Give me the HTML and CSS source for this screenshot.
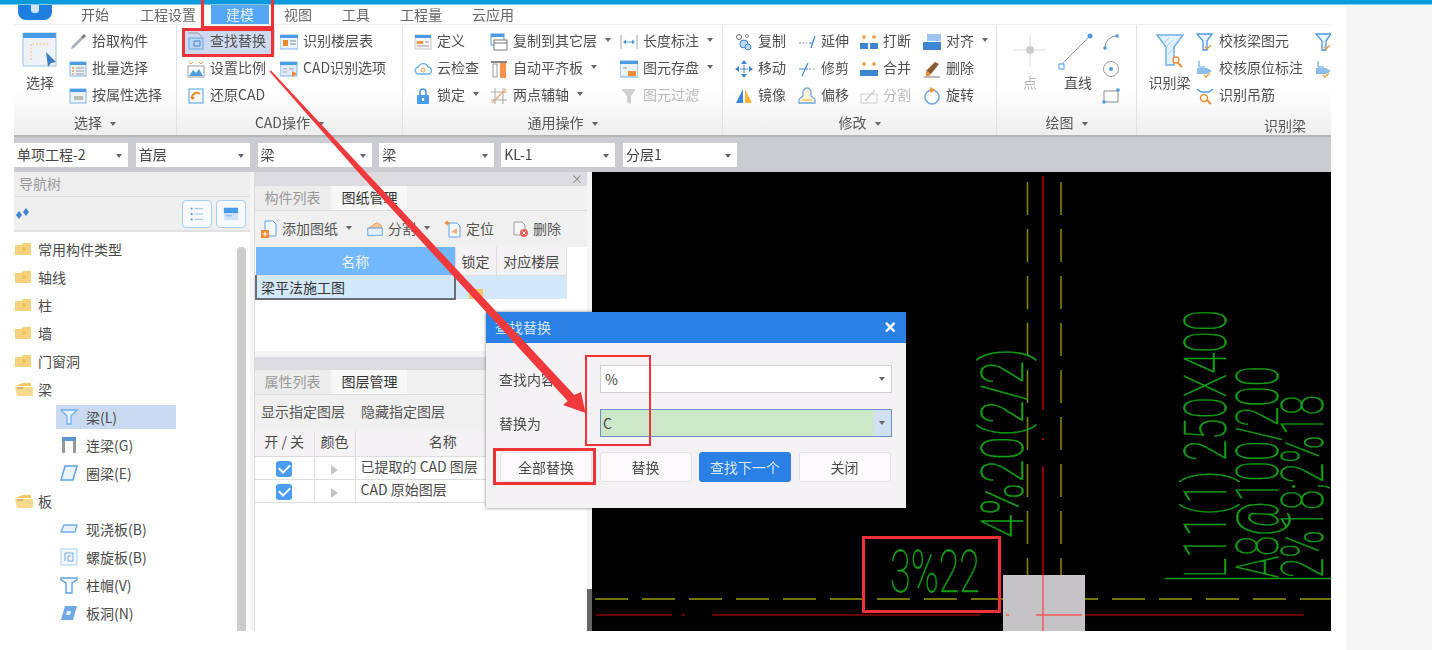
FILE: index.html
```html
<!DOCTYPE html>
<html lang="zh-CN">
<head>
    <meta charset="UTF-8">
    <title>查找替换</title>
    <link rel="stylesheet" href="styles.css">
</head>
<body>
<svg class="defs">
    <symbol id="i-pick" viewBox="0 0 18 18"><path d="M2 16l3-1 9-9-2-2-9 9z" fill="#aab0b6"/><path d="M12 4l3-3 2 2-3 3z" fill="#777"/></symbol>
    <symbol id="i-batch" viewBox="0 0 18 18"><rect x="1" y="2" width="16" height="14" fill="#eef4fb" stroke="#7db4ea"/><rect x="1" y="2" width="16" height="3" fill="#4a9be8"/><path d="M3 8h2M3 11h2M3 14h2" stroke="#f59a3a" stroke-width="1.4"/><path d="M7 8h8M7 11h8M7 14h8" stroke="#999"/></symbol>
    <symbol id="i-attr" viewBox="0 0 18 18"><rect x="1" y="2" width="16" height="14" fill="#eef4fb" stroke="#7db4ea"/><rect x="1" y="2" width="16" height="3" fill="#4a9be8"/><rect x="5" y="9" width="9" height="4" fill="#bbb"/></symbol>
    <symbol id="i-find" viewBox="0 0 18 18"><path d="M1 1h10l4 4" fill="none" stroke="#999"/><rect x="2" y="6" width="14" height="11" fill="#b9d4f4" stroke="#6fa8e4"/><path d="M7 9h6v5H7z" fill="none" stroke="#4a86c8"/></symbol>
    <symbol id="i-floor" viewBox="0 0 18 18"><rect x="0" y="2" width="18" height="14" fill="#eef4fb" stroke="#7db4ea"/><rect x="0" y="2" width="18" height="3" fill="#4a9be8"/><rect x="3" y="7" width="5" height="6" fill="#f08a30"/><path d="M10 8h6M10 11h6" stroke="#888"/></symbol>
    <symbol id="i-scale" viewBox="0 0 18 18"><path d="M2 2l2 2 2-2M12 2l2 2 2-2" stroke="#f59a3a" fill="none"/><rect x="1" y="6" width="16" height="11" fill="#fff" stroke="#999"/><path d="M2 16l4-6 3 3 3-4 4 7z" fill="#4a9be8"/></symbol>
    <symbol id="i-restore" viewBox="0 0 18 18"><rect x="2" y="2" width="14" height="14" fill="none" stroke="#4a9be8"/><path d="M5 12a5 5 0 0 1 8-5" fill="none" stroke="#f08a30" stroke-width="2"/><path d="M3 10l3 3 2-3z" fill="#f08a30"/></symbol>
    <symbol id="i-cadopt" viewBox="0 0 18 18"><rect x="0" y="2" width="17" height="14" fill="#dfeafa" stroke="#7db4ea"/><rect x="0" y="2" width="17" height="3" fill="#4a9be8"/><path d="M3 9h4M3 12h4M9 9h5" stroke="#9ab"/><path d="M12 11l5 3-5 3z" fill="#f08a30"/></symbol>
    <symbol id="i-define" viewBox="0 0 18 18"><rect x="1" y="2" width="16" height="14" fill="#f4f4f4" stroke="#ccc"/><rect x="1" y="2" width="16" height="3" fill="#4a9be8"/><rect x="3" y="8" width="6" height="3" fill="#f59a3a"/><path d="M11 9h4M3 13h12" stroke="#999"/></symbol>
    <symbol id="i-cloud" viewBox="0 0 18 18"><path d="M5 14a3.5 3.5 0 0 1-.5-7A5 5 0 0 1 14 7a3.5 3.5 0 0 1 0 7z" fill="#fff" stroke="#63aeee" stroke-width="1.3"/><circle cx="9" cy="10" r="2" fill="none" stroke="#f59a3a"/></symbol>
    <symbol id="i-lock" viewBox="0 0 18 18"><path d="M6 8V5a3 3 0 0 1 6 0v3" fill="none" stroke="#4a9be8" stroke-width="1.6"/><rect x="3" y="8" width="12" height="9" rx="1" fill="#4a9be8"/><rect x="8" y="11" width="2" height="3" fill="#fff"/></symbol>
    <symbol id="i-copyf" viewBox="0 0 18 18"><rect x="1" y="1" width="13" height="11" fill="#fff" stroke="#4a9be8"/><rect x="1" y="1" width="13" height="3" fill="#4a9be8"/><rect x="4" y="7" width="13" height="10" fill="#fff" stroke="#777"/><path d="M4 10h13" stroke="#777"/></symbol>
    <symbol id="i-slab" viewBox="0 0 18 18"><path d="M1 2h16" stroke="#888" stroke-width="2"/><rect x="3" y="4" width="4" height="13" fill="#fff" stroke="#999"/><rect x="10" y="3" width="6" height="15" fill="#f8924a"/></symbol>
    <symbol id="i-axis" viewBox="0 0 18 18"><path d="M5 1v16M13 1v16M1 5h16M1 13h16" stroke="#aaa"/><path d="M2 16L16 2" stroke="#f0a878" stroke-width="1.4"/></symbol>
    <symbol id="i-dim" viewBox="0 0 18 18"><path d="M1 2v14M17 2v14" stroke="#aaa"/><path d="M4 9h10" stroke="#4a9be8"/><path d="M3 9l3-2.500v5zM15 9l-3-2.500v5z" fill="#4a9be8"/></symbol>
    <symbol id="i-save" viewBox="0 0 18 18"><rect x="0" y="1" width="18" height="16" fill="#eaf2fb" stroke="#6fa8e4"/><rect x="0" y="1" width="18" height="3" fill="#4a9be8"/><rect x="8" y="11" width="8" height="5" fill="#f08a30"/><path d="M3 8h4" stroke="#999"/></symbol>
    <symbol id="i-filter" viewBox="0 0 18 18"><path d="M1 2h15l-5 7v8l-4-2V9z" fill="#cfcfcf"/></symbol>
    <symbol id="i-copy" viewBox="0 0 18 18"><circle cx="4" cy="4" r="2.500" fill="none" stroke="#666"/><circle cx="12" cy="3" r="1.500" fill="none" stroke="#888"/><circle cx="9" cy="11" r="4" fill="#bcd8f5" stroke="#3c86d4"/><circle cx="13" cy="14" r="3" fill="#bcd8f5" stroke="#3c86d4"/></symbol>
    <symbol id="i-move" viewBox="0 0 18 18"><path d="M5 9h8M9 5v8" stroke="#3c86d4"/><path d="M9 0l3 4H6zM9 18l-3-4h6zM0 9l4-3v6zM18 9l-4 3V6z" fill="#3c86d4"/></symbol>
    <symbol id="i-mirror" viewBox="0 0 18 18"><path d="M8 2v14H1z" fill="#3c86d4"/><path d="M10 2v14h7z" fill="#f7b733"/></symbol>
    <symbol id="i-extend" viewBox="0 0 18 18"><path d="M1 10h8" stroke="#888" stroke-dasharray="2 1.500"/><path d="M11 10h3M13 15l4-12" stroke="#3c86d4" stroke-width="1.200"/></symbol>
    <symbol id="i-trim" viewBox="0 0 18 18"><path d="M11 9h6" stroke="#888" stroke-dasharray="2 1.500"/><path d="M1 9h9M4 16l6-13" stroke="#3c86d4" stroke-width="1.200"/></symbol>
    <symbol id="i-offset" viewBox="0 0 18 18"><path d="M1 16v-3c0-2 3-3 4-4V5a4 4 0 0 1 8 0v4c1 1 4 2 4 4v3z" fill="#fff3d8" stroke="#6fa8e4" stroke-width="1.300"/><path d="M4 13h10" stroke="#f0b040"/></symbol>
    <symbol id="i-break" viewBox="0 0 18 18"><path d="M4 2v4M14 2v4" stroke="#f59a3a" stroke-width="1.500"/><path d="M2 4h4M12 4h4" stroke="#f59a3a" stroke-width="1.500"/><rect x="0" y="10" width="8" height="6" fill="#3c86d4"/><rect x="10" y="10" width="8" height="6" fill="#3c86d4"/></symbol>
    <symbol id="i-merge" viewBox="0 0 18 18"><path d="M4 2v4M14 2v4" stroke="#f59a3a" stroke-width="1.500"/><path d="M2 4h4M12 4h4" stroke="#f59a3a" stroke-width="1.500"/><rect x="0" y="10" width="18" height="6" fill="#3c86d4"/></symbol>
    <symbol id="i-split" viewBox="0 0 18 18"><path d="M1 7h16v9H1z" fill="none" stroke="#ccc"/><path d="M5 14L15 3" stroke="#ccc" stroke-width="1.500"/></symbol>
    <symbol id="i-alignr" viewBox="0 0 18 18"><rect x="4" y="1" width="14" height="7" fill="#9dc5ef"/><rect x="0" y="9" width="18" height="8" fill="#3c86d4"/></symbol>
    <symbol id="i-erase" viewBox="0 0 18 18"><path d="M3 11l9-9 4 2-8 10z" fill="#8a5a30"/><path d="M3 11l5 3-2 2H3z" fill="#f08a30"/><path d="M1 17h16" stroke="#777"/></symbol>
    <symbol id="i-rotate" viewBox="0 0 18 18"><circle cx="9" cy="10" r="7" fill="none" stroke="#6fa8e4" stroke-width="1.600"/><path d="M7 0l6 3-6 3z" fill="#f59a3a"/></symbol>
    <symbol id="i-arc" viewBox="0 0 18 18"><path d="M3 15C3 8 8 3 15 3" fill="none" stroke="#888"/><circle cx="3" cy="15" r="1.800" fill="#4a9be8"/><circle cx="15" cy="3" r="1.800" fill="#4a9be8"/></symbol>
    <symbol id="i-circle" viewBox="0 0 18 18"><circle cx="9" cy="9" r="7.500" fill="none" stroke="#999"/><circle cx="9" cy="9" r="2" fill="#4a9be8"/></symbol>
    <symbol id="i-rect" viewBox="0 0 18 18"><path d="M2 4h14v11H2z" fill="none" stroke="#888"/><circle cx="16" cy="3" r="1.800" fill="#4a9be8"/><circle cx="2" cy="15" r="1.800" fill="#4a9be8"/></symbol>
    <symbol id="i-check" viewBox="0 0 18 18"><path d="M1 1h15l-5 7v9H7V8z" fill="#eaf3fc" stroke="#4a9be8" stroke-width="1.300"/><path d="M9 14l2 2 4-4" fill="none" stroke="#f59a3a" stroke-width="1.300"/></symbol>
    <symbol id="i-checkl" viewBox="0 0 18 18"><path d="M3 1v6h6" fill="none" stroke="#4a9be8"/><path d="M1 8h10l5 3-5 3H1z" fill="#8cbcee"/><path d="M8 15l2 2 4-4" fill="none" stroke="#f59a3a" stroke-width="1.300"/></symbol>
    <symbol id="i-hanger" viewBox="0 0 18 18"><path d="M1 2l4 3h8l4-3" fill="none" stroke="#4a9be8" stroke-width="1.300"/><circle cx="8" cy="11" r="3.500" fill="none" stroke="#f08a30" stroke-width="1.500"/><path d="M11 13l4 4" stroke="#f08a30" stroke-width="1.800"/></symbol>
    <symbol id="i-beam" viewBox="0 0 18 18"><path d="M1 2h16l-6 6v8H7V8z" fill="#e6f0fb" stroke="#6fb0ee" stroke-width="1.300"/></symbol>
    <symbol id="i-lian" viewBox="0 0 18 18"><rect x="2" y="1" width="14" height="4" fill="#5b95d4"/><path d="M3.500 5v12M14.500 5v12" stroke="#999" stroke-width="3"/></symbol>
    <symbol id="i-ring" viewBox="0 0 18 18"><path d="M5 2h12l-4 14H1z" fill="#eaf3fc" stroke="#5ba2ea" stroke-width="1.500"/></symbol>
    <symbol id="i-cast" viewBox="0 0 18 18"><path d="M4 5h13l-2 7H1z" fill="#eaf3fc" stroke="#6fb0ee" stroke-width="1.500"/></symbol>
    <symbol id="i-spiral" viewBox="0 0 18 18"><rect x="1" y="1" width="16" height="16" fill="#f3f8fd" stroke="#a6cdf3"/><path d="M5 13V5h8v8H8V8h3" fill="none" stroke="#6fa8e4"/></symbol>
    <symbol id="i-cap" viewBox="0 0 18 18"><path d="M1 2h16v2l-5 3v10H6V7L1 4z" fill="#f3f8fd" stroke="#5ba2ea" stroke-width="1.400"/></symbol>
    <symbol id="i-hole" viewBox="0 0 18 18"><path d="M5 2h12l-4 14H1z" fill="#6fa8e4"/><path d="M7 7h4l-1 4H6z" fill="#e6f0fb"/></symbol>
    <symbol id="i-fold" viewBox="0 0 18 14"><path d="M0 3h6l2-2h8v12H0z" fill="#f6d27c"/><path d="M7 7h4M9 5v4" stroke="#e8b64e"/></symbol>
    <symbol id="i-open" viewBox="0 0 18 14"><path d="M0 4l8-3h8v3z" fill="#f3c865"/><path d="M0 5h18v9H2z" fill="#f8da8e"/><path d="M2 6h6" stroke="#9a8750"/></symbol>
    <symbol id="i-add" viewBox="0 0 18 18"><path d="M5 1h8l3 3v12H5z" fill="#f3f8fd" stroke="#5ba2ea"/><rect x="1" y="10" width="8" height="8" fill="#f08a30"/><path d="M5 11.500v5M2.500 14h5" stroke="#fff"/></symbol>
    <symbol id="i-cut" viewBox="0 0 20 18"><path d="M3 8l9-6 5 3v3z" fill="#f7c9a0" stroke="#f08a30"/><rect x="2" y="8" width="16" height="8" fill="#e6f0fb" stroke="#5ba2ea"/></symbol>
    <symbol id="i-loc" viewBox="0 0 18 18"><path d="M5 3h8l3 3v11H5z" fill="#f3f8fd" stroke="#5ba2ea"/><path d="M3 0l1 2 2 1-2 1-1 2-1-2-2-1 2-1z" fill="#f08a30"/><path d="M7 12l6-4v6z" fill="#f8b070"/></symbol>
    <symbol id="i-del" viewBox="0 0 18 18"><path d="M3 2h8l3 3v10H3z" fill="#f7f7f7" stroke="#999"/><circle cx="13" cy="13" r="4" fill="#e8625a"/><path d="M11.500 11.500l3 3M14.500 11.500l-3 3" stroke="#fff"/></symbol>
</svg>

<div class="topbar"></div>
<div class="page">
    <div class="app">
        <div class="tabs">
            <div class="logo"><span class="logo-mark"></span></div>
            <div class="tab-first tab">开始</div>
            <div class="tab">工程设置</div>
            <div class="tab active">建模</div>
            <div class="tab">视图</div>
            <div class="tab">工具</div>
            <div class="tab">工程量</div>
            <div class="tab">云应用</div>
        </div>

        <div class="ribbon">
            <div class="group g1">
                <div class="group-body">
                    <div class="big">
                        <svg class="big-icon" viewBox="0 0 36 39"><rect x="1" y="1" width="33" height="33" fill="#eef1f8" stroke="#9cc4ee"/><rect x="1" y="1" width="33" height="5" fill="#4a9be8"/><path d="M9 28V12h18" fill="none" stroke="#f5c26a" stroke-dasharray="2 1.500"/><path d="M24 20l10 10-5 1-3 4z" fill="#3c7ec4"/></svg>
                        <span>选择</span>
                    </div>
                    <div class="col">
                        <div class="item"><svg class="ico"><use href="#i-pick"/></svg>拾取构件</div>
                        <div class="item"><svg class="ico"><use href="#i-batch"/></svg>批量选择</div>
                        <div class="item"><svg class="ico"><use href="#i-attr"/></svg>按属性选择</div>
                    </div>
                </div>
                <div class="group-label">选择 <i class="caret"></i></div>
            </div>

            <div class="group g2">
                <div class="group-body">
                    <div class="col">
                        <div class="item hl"><svg class="ico"><use href="#i-find"/></svg>查找替换</div>
                        <div class="item"><svg class="ico"><use href="#i-scale"/></svg>设置比例</div>
                        <div class="item"><svg class="ico"><use href="#i-restore"/></svg>还原CAD</div>
                    </div>
                    <div class="col">
                        <div class="item"><svg class="ico"><use href="#i-floor"/></svg>识别楼层表</div>
                        <div class="item"><svg class="ico"><use href="#i-cadopt"/></svg>CAD识别选项</div>
                    </div>
                </div>
                <div class="group-label">CAD操作 <i class="caret"></i></div>
            </div>

            <div class="group g3">
                <div class="group-body">
                    <div class="col">
                        <div class="item"><svg class="ico"><use href="#i-define"/></svg>定义</div>
                        <div class="item"><svg class="ico"><use href="#i-cloud"/></svg>云检查</div>
                        <div class="item"><svg class="ico"><use href="#i-lock"/></svg>锁定 <i class="caret"></i></div>
                    </div>
                    <div class="col">
                        <div class="item"><svg class="ico"><use href="#i-copyf"/></svg>复制到其它层 <i class="caret"></i></div>
                        <div class="item"><svg class="ico"><use href="#i-slab"/></svg>自动平齐板 <i class="caret"></i></div>
                        <div class="item"><svg class="ico"><use href="#i-axis"/></svg>两点辅轴 <i class="caret"></i></div>
                    </div>
                    <div class="col">
                        <div class="item"><svg class="ico"><use href="#i-dim"/></svg>长度标注 <i class="caret"></i></div>
                        <div class="item"><svg class="ico"><use href="#i-save"/></svg>图元存盘 <i class="caret"></i></div>
                        <div class="item off"><svg class="ico"><use href="#i-filter"/></svg>图元过滤</div>
                    </div>
                </div>
                <div class="group-label">通用操作 <i class="caret"></i></div>
            </div>

            <div class="group g4">
                <div class="group-body">
                    <div class="col">
                        <div class="item"><svg class="ico"><use href="#i-copy"/></svg>复制</div>
                        <div class="item"><svg class="ico"><use href="#i-move"/></svg>移动</div>
                        <div class="item"><svg class="ico"><use href="#i-mirror"/></svg>镜像</div>
                    </div>
                    <div class="col">
                        <div class="item"><svg class="ico"><use href="#i-extend"/></svg>延伸</div>
                        <div class="item"><svg class="ico"><use href="#i-trim"/></svg>修剪</div>
                        <div class="item"><svg class="ico"><use href="#i-offset"/></svg>偏移</div>
                    </div>
                    <div class="col">
                        <div class="item"><svg class="ico"><use href="#i-break"/></svg>打断</div>
                        <div class="item"><svg class="ico"><use href="#i-merge"/></svg>合并</div>
                        <div class="item off"><svg class="ico"><use href="#i-split"/></svg>分割</div>
                    </div>
                    <div class="col">
                        <div class="item"><svg class="ico"><use href="#i-alignr"/></svg>对齐 <i class="caret"></i></div>
                        <div class="item"><svg class="ico"><use href="#i-erase"/></svg>删除</div>
                        <div class="item"><svg class="ico"><use href="#i-rotate"/></svg>旋转</div>
                    </div>
                </div>
                <div class="group-label">修改 <i class="caret"></i></div>
            </div>

            <div class="group g5">
                <div class="group-body">
                    <div class="big off">
                        <svg class="big-icon" viewBox="0 0 36 39"><path d="M18 2v32M2 18h32" stroke="#ddd"/><circle cx="18" cy="18" r="4" fill="#ccc"/></svg>
                        <span>点</span>
                    </div>
                    <div class="big">
                        <svg class="big-icon" viewBox="0 0 36 39"><path d="M0 34L30 4" stroke="#999"/><rect x="-1" y="32" width="5" height="5" fill="#fff" stroke="#4a9be8"/><circle cx="30" cy="4" r="2.500" fill="#4a9be8"/></svg>
                        <span>直线</span>
                    </div>
                    <div class="col">
                        <div class="item"><svg class="ico"><use href="#i-arc"/></svg></div>
                        <div class="item"><svg class="ico"><use href="#i-circle"/></svg></div>
                        <div class="item"><svg class="ico"><use href="#i-rect"/></svg></div>
                    </div>
                </div>
                <div class="group-label">绘图 <i class="caret"></i></div>
            </div>

            <div class="group g6">
                <div class="group-body">
                    <div class="big">
                        <svg class="big-icon" viewBox="0 0 36 39"><path d="M5 3h26l-9 12v18h-8V15z" fill="#e3effb" stroke="#6fb0ee" stroke-width="1.500"/><path d="M11 12l6-6M15 14l6-6M16 22l5-5" stroke="#a8cdf3"/><circle cx="24" cy="28" r="3" fill="#fff" stroke="#f08a30" stroke-width="1.300"/><path d="M26 31l4 4" stroke="#f08a30" stroke-width="1.800"/></svg>
                        <span>识别梁</span>
                    </div>
                    <div class="col">
                        <div class="item"><svg class="ico"><use href="#i-check"/></svg>校核梁图元</div>
                        <div class="item"><svg class="ico"><use href="#i-checkl"/></svg>校核原位标注</div>
                        <div class="item"><svg class="ico"><use href="#i-hanger"/></svg>识别吊筋</div>
                    </div>
                    <div class="col">
                        <div class="item"><svg class="ico"><use href="#i-check"/></svg></div>
                        <div class="item"><svg class="ico"><use href="#i-checkl"/></svg></div>
                    </div>
                </div>
                <div class="group-label label-right">识别梁</div>
            </div>
        </div>

        <div class="combos">
            <div class="combo">单项工程-2<i class="caret"></i></div>
            <div class="combo">首层<i class="caret"></i></div>
            <div class="combo">梁<i class="caret"></i></div>
            <div class="combo">梁<i class="caret"></i></div>
            <div class="combo">KL-1<i class="caret"></i></div>
            <div class="combo">分层1<i class="caret"></i></div>
        </div>

        <div class="workspace">
            <div class="nav">
                <div class="nav-head">导航树</div>
                <div class="nav-tools">
                    <svg class="sparkle" viewBox="0 0 16 12"><path d="M5 3l3 4-3 4-3-4zM12 0l3 4-3 4-3-4z" fill="#3c86d4"/></svg>
                    <div class="view-btn"><svg viewBox="0 0 18 18"><path d="M2 3h2M2 9h2M2 15h2" stroke="#4a9be8" stroke-width="2"/><path d="M6 3h10M6 9h10M6 15h10" stroke="#8fbdec"/></svg></div>
                    <div class="view-btn"><svg viewBox="0 0 18 18"><rect x="1" y="2" width="16" height="14" fill="#cfe3f8"/><rect x="1" y="2" width="16" height="6" fill="#4a9be8"/><path d="M3 11h7" stroke="#6fa8e4"/></svg></div>
                </div>
                <div class="tree">
                    <div class="tree-list">
                        <div class="row"><svg class="folder"><use href="#i-fold"/></svg>常用构件类型</div>
                        <div class="row"><svg class="folder"><use href="#i-fold"/></svg>轴线</div>
                        <div class="row"><svg class="folder"><use href="#i-fold"/></svg>柱</div>
                        <div class="row"><svg class="folder"><use href="#i-fold"/></svg>墙</div>
                        <div class="row"><svg class="folder"><use href="#i-fold"/></svg>门窗洞</div>
                        <div class="row"><svg class="folder"><use href="#i-open"/></svg>梁</div>
                        <div class="row child"><div class="leaf selected"><svg class="ico"><use href="#i-beam"/></svg>梁(L)</div></div>
                        <div class="row child"><div class="leaf"><svg class="ico"><use href="#i-lian"/></svg>连梁(G)</div></div>
                        <div class="row child"><div class="leaf"><svg class="ico"><use href="#i-ring"/></svg>圈梁(E)</div></div>
                        <div class="row"><svg class="folder"><use href="#i-open"/></svg>板</div>
                        <div class="row child"><div class="leaf"><svg class="ico"><use href="#i-cast"/></svg>现浇板(B)</div></div>
                        <div class="row child"><div class="leaf"><svg class="ico"><use href="#i-spiral"/></svg>螺旋板(B)</div></div>
                        <div class="row child"><div class="leaf"><svg class="ico"><use href="#i-cap"/></svg>柱帽(V)</div></div>
                        <div class="row child"><div class="leaf"><svg class="ico"><use href="#i-hole"/></svg>板洞(N)</div></div>
                    </div>
                    <div class="scrollbar"></div>
                </div>
            </div>

            <div class="mid">
                <div class="panel panel-top">
                    <div class="strip"><span class="strip-x">×</span></div>
                    <div class="ptabs">
                        <div class="ptab">构件列表</div>
                        <div class="ptab on">图纸管理</div>
                    </div>
                    <div class="ptools">
                        <span class="tool"><svg class="ico"><use href="#i-add"/></svg>添加图纸 <i class="caret"></i></span>
                        <span class="tool"><svg class="ico"><use href="#i-cut"/></svg>分割 <i class="caret"></i></span>
                        <span class="tool"><svg class="ico"><use href="#i-loc"/></svg>定位</span>
                        <span class="tool tool-last"><svg class="ico"><use href="#i-del"/></svg>删除</span>
                    </div>
                    <table class="grid sheets">
                        <tr class="head"><th class="th-blue">名称</th><th>锁定</th><th>对应楼层</th></tr>
                        <tr class="sel"><td class="cur">梁平法施工图</td><td><svg class="mini-lock" viewBox="0 0 18 14"><path d="M2 4h14v10H2z" fill="#f3c865"/></svg></td><td></td></tr>
                    </table>
                </div>
                <div class="panel panel-bot">
                    <div class="strip"></div>
                    <div class="ptabs">
                        <div class="ptab">属性列表</div>
                        <div class="ptab on">图层管理</div>
                    </div>
                    <div class="ptools layers-tools">
                        <span>显示指定图层</span>
                        <span>隐藏指定图层</span>
                    </div>
                    <table class="grid layers">
                        <tr class="head"><th>开 / 关</th><th>颜色</th><th>名称</th></tr>
                        <tr><td class="c"><span class="tick"></span></td><td class="c"><i class="play"></i></td><td>已提取的 CAD 图层</td></tr>
                        <tr><td class="c"><span class="tick"></span></td><td class="c"><i class="play"></i></td><td>CAD 原始图层</td></tr>
                    </table>
                </div>
            </div>

            <div class="sash"></div>

            <svg class="cad" viewBox="592 172 739 459">
                <path d="M1043 176V410M1043 467V631" stroke="#8a0000" stroke-width="2"/>
                <path d="M1043 438v2" stroke="#a00000" stroke-width="2"/>
                <path d="M1027.500 182V575M1061 182V575" stroke="#8a8a00" stroke-width="1.500" stroke-dasharray="33 14"/>
                <path d="M595 599H1331" stroke="#9a9a00" stroke-width="1.500" stroke-dasharray="33 14"/>
                <path d="M596 615H672M682 615h3M712 615H980M1085 615H1304" stroke="#8a0000" stroke-width="1.500"/>
                <rect x="1003" y="575" width="82" height="56" fill="#c5c3c6"/>
                <path d="M1043 575V631M1036 615H1082M1006 615h3" stroke="#f25a5a" stroke-width="1.500"/>
                <path d="M1165 578.500H1331" stroke="#0aa00a" stroke-width="1.500"/>
                <g class="cad-text">
                    <text x="890" y="592" textLength="90" lengthAdjust="spacingAndGlyphs">3%22</text>
                    <text transform="translate(1023 538) rotate(-90)" textLength="190" lengthAdjust="spacingAndGlyphs">4%20(2/2)</text>
                    <text transform="translate(1226 578) rotate(-90)" textLength="268" lengthAdjust="spacingAndGlyphs">L11(1) 250X400</text>
                    <text transform="translate(1278 578) rotate(-90)" textLength="212" lengthAdjust="spacingAndGlyphs">A8@100/200</text>
                    <text transform="translate(1323 578) rotate(-90)" textLength="183" lengthAdjust="spacingAndGlyphs">2%18;2%18</text>
                </g>
            </svg>
        </div>
    </div>
    <div class="gutter"></div>
    <div class="side"></div>

    <div class="dialog">
        <div class="dialog-head">查找替换<span class="dialog-x">×</span></div>
        <div class="dialog-body">
            <div class="field">
                <label>查找内容</label>
                <div class="input">%<i class="caret"></i></div>
            </div>
            <div class="field">
                <label>替换为</label>
                <div class="input active-input">C<span class="drop"><i class="caret"></i></span></div>
            </div>
            <div class="buttons">
                <div class="btn">全部替换</div>
                <div class="btn">替换</div>
                <div class="btn primary">查找下一个</div>
                <div class="btn">关闭</div>
            </div>
        </div>
    </div>

    <!-- 红色标注 -->
    <div class="mark mark-tab"></div>
    <div class="mark mark-find"></div>
    <div class="mark mark-input"></div>
    <div class="mark mark-all"></div>
    <div class="mark mark-cad"></div>
    <svg class="arrow" viewBox="0 0 1432 650"><path d="M269.500 71.500L271 70.500L362 168L574.300 394.900L581 392L585.500 413L563 405L567.700 401.100L358 172z" fill="#f0393c"/></svg>
</div>
</body>
</html>
```

FILE: styles.css
```css
* {
    box-sizing: border-box;
}
body {
    margin: 0;
    background: #fff;
    font-family: "Noto Sans CJK SC", "Noto Sans", sans-serif;
    font-size: 14px;
    color: #4a4a4a;
    overflow: hidden;
}
.defs {
    display: none;
}
.topbar {
    height: 5px;
    background: #0a9bdc;
    border-bottom: 1px solid #7cc8ea;
}
.page {
    position: relative;
    display: flex;
    height: 645px;
    filter: blur(0.65px);
}
.app {
    width: 1317px;
    height: 626px;
    margin-left: 14px;
    display: flex;
    flex-direction: column;
}
.gutter {
    width: 15px;
}
.side {
    width: 86px;
    background: #f5f5f5;
}
.caret {
    display: inline-block;
    border: 3.5px solid transparent;
    border-top: 4px solid #666;
    border-bottom: 0;
    margin-left: 5px;
    vertical-align: middle;
}

/* tabs */
.tabs {
    display: flex;
    height: 19px;
    line-height: 18px;
    background: #fff;
    color: #666;
}
.logo {
    width: 34px;
    height: 15px;
    margin-left: 4px;
    margin-right: 14px;
    padding-left: 13px;
    background: #1f7fe0;
    border-radius: 0 0 8px 8px;
}
.logo-mark {
    display: block;
    width: 8px;
    height: 8px;
    background: #cfe3fb;
    border-radius: 0 0 3px 3px;
}
.tab {
    padding: 0 15px;
}
.tab-first {
    margin-right: 1px;
}
.tab.active {
    background: #55a6f6;
    color: #e4f0fd;
}

/* ribbon */
.ribbon {
    display: flex;
    height: 113px;
    background: linear-gradient(#fff 0, #fff 60%, #eee 100%);
    border-top: 1px solid #eee;
    border-bottom: 2px solid #b5b5b5;
}
.group {
    display: flex;
    flex-direction: column;
    border-right: 1px solid #e2e2e2;
    overflow: hidden;
}
.group-body {
    display: grid;
    height: 81px;
    margin-top: 3px;
}
.group-label {
    height: 26px;
    line-height: 26px;
    text-align: center;
    color: #555;
}
.label-right {
    padding: 3px 0 0 102px;
}
.g1 {
    width: 163px;
}
.g1 .group-body {
    padding-left: 8px;
    grid-template-columns: 47px 1fr;
}
.g1 .big {
    width: 36px;
}
.g2 {
    width: 226px;
}
.g2 .group-body {
    padding-left: 10px;
    grid-template-columns: 93px 1fr;
}
.g3 {
    width: 320px;
}
.g3 .group-body {
    padding-left: 11px;
    grid-template-columns: 76px 130px 1fr;
}
.g4 {
    width: 274px;
}
.g4 .group-body {
    padding-left: 12px;
    grid-template-columns: 63px 62px 63px 1fr;
}
.g5 {
    width: 140px;
}
.g5 .group-body {
    padding-left: 9px;
    grid-template-columns: 48px 48px 40px;
}
.g6 {
    width: 194px;
    border-right: 0;
}
.g6 .group-body {
    padding-left: 6px;
    grid-template-columns: 53px 119px 20px;
}
.item {
    display: flex;
    align-items: center;
    height: 27px;
    padding-bottom: 3px;
    white-space: nowrap;
    color: #505050;
}
.item .ico {
    margin-top: 3px;
}
.item .caret {
    margin-left: 8px;
}
.item.off,
.big.off {
    color: #b8b8b8;
}
.item.hl {
    height: 26px;
    margin: 0 5px 1px -4px;
    padding-left: 4px;
    background: #cdd9ef;
}
.ico {
    flex: none;
    width: 18px;
    height: 18px;
    margin-right: 5px;
}
.big {
    display: flex;
    flex-direction: column;
    align-items: center;
    color: #505050;
}
.big-icon {
    width: 36px;
    height: 39px;
    margin-top: 4px;
    margin-bottom: 1px;
    overflow: visible;
}

/* combo bar */
.combos {
    display: flex;
    gap: 7.6px;
    align-items: center;
    height: 35px;
    background: #cbccd1;
}
.combo {
    position: relative;
    width: 114.2px;
    height: 24px;
    line-height: 22px;
    padding-left: 3px;
    background: #fff;
    color: #444;
}
.combo .caret,
.input .caret {
    position: absolute;
    right: 6px;
    top: 11px;
    margin: 0;
}

/* workspace */
.workspace {
    flex: 1;
    display: flex;
    min-height: 0;
    background: #f5f5f5;
}
.nav {
    width: 236px;
    display: flex;
    flex-direction: column;
    background: #fff;
}
.nav-head {
    height: 25px;
    line-height: 23px;
    padding-left: 5px;
    background: #eeeeee;
    border-bottom: 1px solid #ddd;
    color: #999;
}
.nav-tools {
    display: flex;
    align-items: center;
    gap: 4px;
    height: 35px;
    padding-right: 4px;
    background: #efefef;
    border-bottom: 2px solid #e2e2e2;
}
.sparkle {
    width: 16px;
    height: 12px;
    margin-right: auto;
}
.view-btn {
    width: 30px;
    height: 28px;
    padding: 5px 6px;
    background: #f7f9fc;
    border: 1px solid #a6cdf3;
    border-radius: 4px;
}
.view-btn svg {
    display: block;
    width: 100%;
    height: 100%;
}
.tree {
    flex: 1;
    display: flex;
    min-height: 0;
    padding-top: 3px;
    overflow: hidden;
}
.tree-list {
    flex: 1;
    min-width: 0;
}
.row {
    display: flex;
    align-items: center;
    height: 28px;
    color: #4a4a4a;
}
.folder {
    width: 18px;
    height: 14px;
    margin: 0 5px 0 1px;
}
.row.child {
    padding-left: 42px;
}
.leaf {
    display: flex;
    align-items: center;
    width: 120px;
    height: 24px;
    padding-left: 4px;
}
.leaf .ico {
    margin-right: 8px;
}
.leaf.selected {
    background: #cbdaf3;
}
.scrollbar {
    width: 9px;
    margin: 12px 4px 0 0;
    background: #cccccc;
    border-radius: 4px 4px 0 0;
}

/* middle panels */
.mid {
    width: 333px;
    margin-left: 4px;
    display: flex;
    flex-direction: column;
    border-left: 1px solid #ddd;
}
.panel {
    background: #fff;
}
.panel-top {
    height: 179px;
}
.panel-bot {
    flex: 1;
    margin-top: 6px;
}
.strip {
    position: relative;
    height: 14px;
    background: #dcdce0;
}
.strip-x {
    position: absolute;
    right: 4px;
    top: 1px;
    font-size: 12px;
    line-height: 12px;
    color: #888;
}
.panel-bot .strip {
    height: 13px;
}
.ptabs {
    display: flex;
    gap: 2px;
    height: 25px;
    background: #f1f1f1;
    border-bottom: 1px solid #ddd;
}
.ptab {
    width: 75px;
    line-height: 23px;
    text-align: center;
    color: #999;
    background: #ececec;
}
.ptab.on {
    color: #333;
    background: #f8f8f8;
}
.ptools {
    display: flex;
    align-items: center;
    gap: 14px;
    height: 36px;
    padding: 0 0 2px 5px;
    background: #f0f0f0;
    color: #555;
}
.tool {
    display: flex;
    align-items: center;
}
.tool .ico {
    margin: 2px 4px 0 0;
}
.tool .caret {
    margin-left: 8px;
}
.tool-last {
    margin-left: 3px;
}
.layers-tools {
    gap: 16px;
    padding: 0 0 4px 6px;
}
.grid {
    border-collapse: collapse;
    table-layout: fixed;
    color: #4a4a4a;
}
.grid th {
    font-weight: 400;
    background: #f5f2f6;
    border-right: 1px solid #ddd;
    border-bottom: 1px solid #ddd;
    height: 28px;
    padding: 0;
}
.sheets {
    width: 312px;
}
.sheets th:nth-child(1) {
    width: 199px;
}
.sheets th:nth-child(2) {
    width: 41px;
}
.sheets .th-blue {
    background: #73b7fd;
    color: #eaf4ff;
}
.sel td {
    height: 24px;
    padding: 0;
    background: #d4e8fc;
}
.sel td.cur {
    padding-left: 4px;
    border: 2px solid #6a6e78;
    border-top: 0;
    color: #333;
}
.mini-lock {
    display: block;
    width: 18px;
    height: 14px;
    margin: 9px 0 0 11px;
}
.layers {
    width: 276px;
}
.layers th {
    height: 25px;
    line-height: 18px;
    padding-bottom: 4px;
}
.layers th:nth-child(1) {
    width: 59px;
}
.layers th:nth-child(2) {
    width: 41px;
}
.layers td {
    height: 23px;
    line-height: 18px;
    padding: 0 0 4px 5px;
    border-right: 1px solid #ddd;
    border-bottom: 1px solid #ddd;
    white-space: nowrap;
}
.layers td.c {
    padding: 0;
    text-align: center;
}
.tick {
    display: inline-block;
    position: relative;
    width: 16px;
    height: 16px;
    background: #4a9cf5;
    border-radius: 3px;
    vertical-align: middle;
}
.tick::after {
    content: "";
    position: absolute;
    left: 3px;
    top: 3px;
    width: 9px;
    height: 5px;
    border-left: 2px solid #fff;
    border-bottom: 2px solid #fff;
    transform: rotate(-45deg);
}
.play {
    display: inline-block;
    border-left: 7px solid #c4c4c4;
    border-top: 5px solid transparent;
    border-bottom: 5px solid transparent;
    vertical-align: middle;
}

/* cad canvas */
.sash {
    flex: none;
    align-self: flex-end;
    width: 5px;
    height: 42px;
    background: #666;
}
.cad {
    width: 739px;
    height: 459px;
    background: #000;
    flex: none;
    overflow: visible;
}
.cad-text text {
    font-family: Roboto, "Liberation Sans", sans-serif;
    font-size: 60px;
    font-weight: 100;
    fill: #12a012;
    stroke: #12a012;
    stroke-width: 0.5;
}

/* dialog */
.dialog {
    position: absolute;
    left: 486px;
    top: 307px;
    width: 420px;
    height: 196px;
    background: #f5f2f6;
    box-shadow: 0 0 3px rgba(0, 0, 0, 0.5);
}
.dialog-head {
    position: relative;
    height: 31px;
    line-height: 31px;
    padding-left: 9px;
    background: #2a80e4;
    color: #cfe3fb;
}
.dialog-x {
    position: absolute;
    right: 10px;
    top: 0;
    font-family: "Liberation Sans", sans-serif;
    font-size: 20px;
    font-weight: 700;
    color: #fff;
}
.dialog-body {
    padding: 22px 14px 0 13px;
}
.field {
    display: flex;
    align-items: center;
    height: 28px;
    margin-bottom: 16px;
}
.field label {
    width: 101px;
    line-height: 26px;
}
.input {
    position: relative;
    flex: 1;
    height: 28px;
    line-height: 26px;
    padding-left: 4px;
    background: #fff;
    border: 1px solid #cfcfcf;
}
.active-input {
    padding-left: 2px;
    background: #cce8c8;
    border-color: #6c90c4;
}
.drop {
    position: absolute;
    right: 0;
    top: 0;
    bottom: 0;
    width: 17px;
    background: #d2e0f5;
}
.buttons {
    display: grid;
    grid-template-columns: repeat(4, 92px);
    gap: 7.5px;
    margin-top: -1px;
    padding-left: 1px;
}
.btn {
    height: 30px;
    line-height: 28px;
    text-align: center;
    background: #fbf9fb;
    border: 1px solid #e2e2e6;
    border-radius: 3px;
}
.btn.primary {
    background: #2a80e4;
    border-color: #2a80e4;
    color: #d8e8fb;
}

/* annotations */
.mark {
    position: absolute;
    border: 3px solid #ee3338;
}
.mark-tab {
    left: 201px;
    top: -5px;
    width: 73px;
    height: 29px;
    border-top: 0;
}
.mark-find {
    left: 182px;
    top: 23px;
    width: 92px;
    height: 29px;
}
.mark-input {
    left: 585px;
    top: 350px;
    width: 66px;
    height: 91px;
    border-width: 2px;
}
.mark-all {
    left: 493px;
    top: 443px;
    width: 103px;
    height: 37px;
}
.mark-cad {
    left: 862px;
    top: 531px;
    width: 139px;
    height: 77px;
}
.arrow {
    position: absolute;
    left: 0;
    top: -5px;
    width: 1432px;
    height: 650px;
    pointer-events: none;
}
```
